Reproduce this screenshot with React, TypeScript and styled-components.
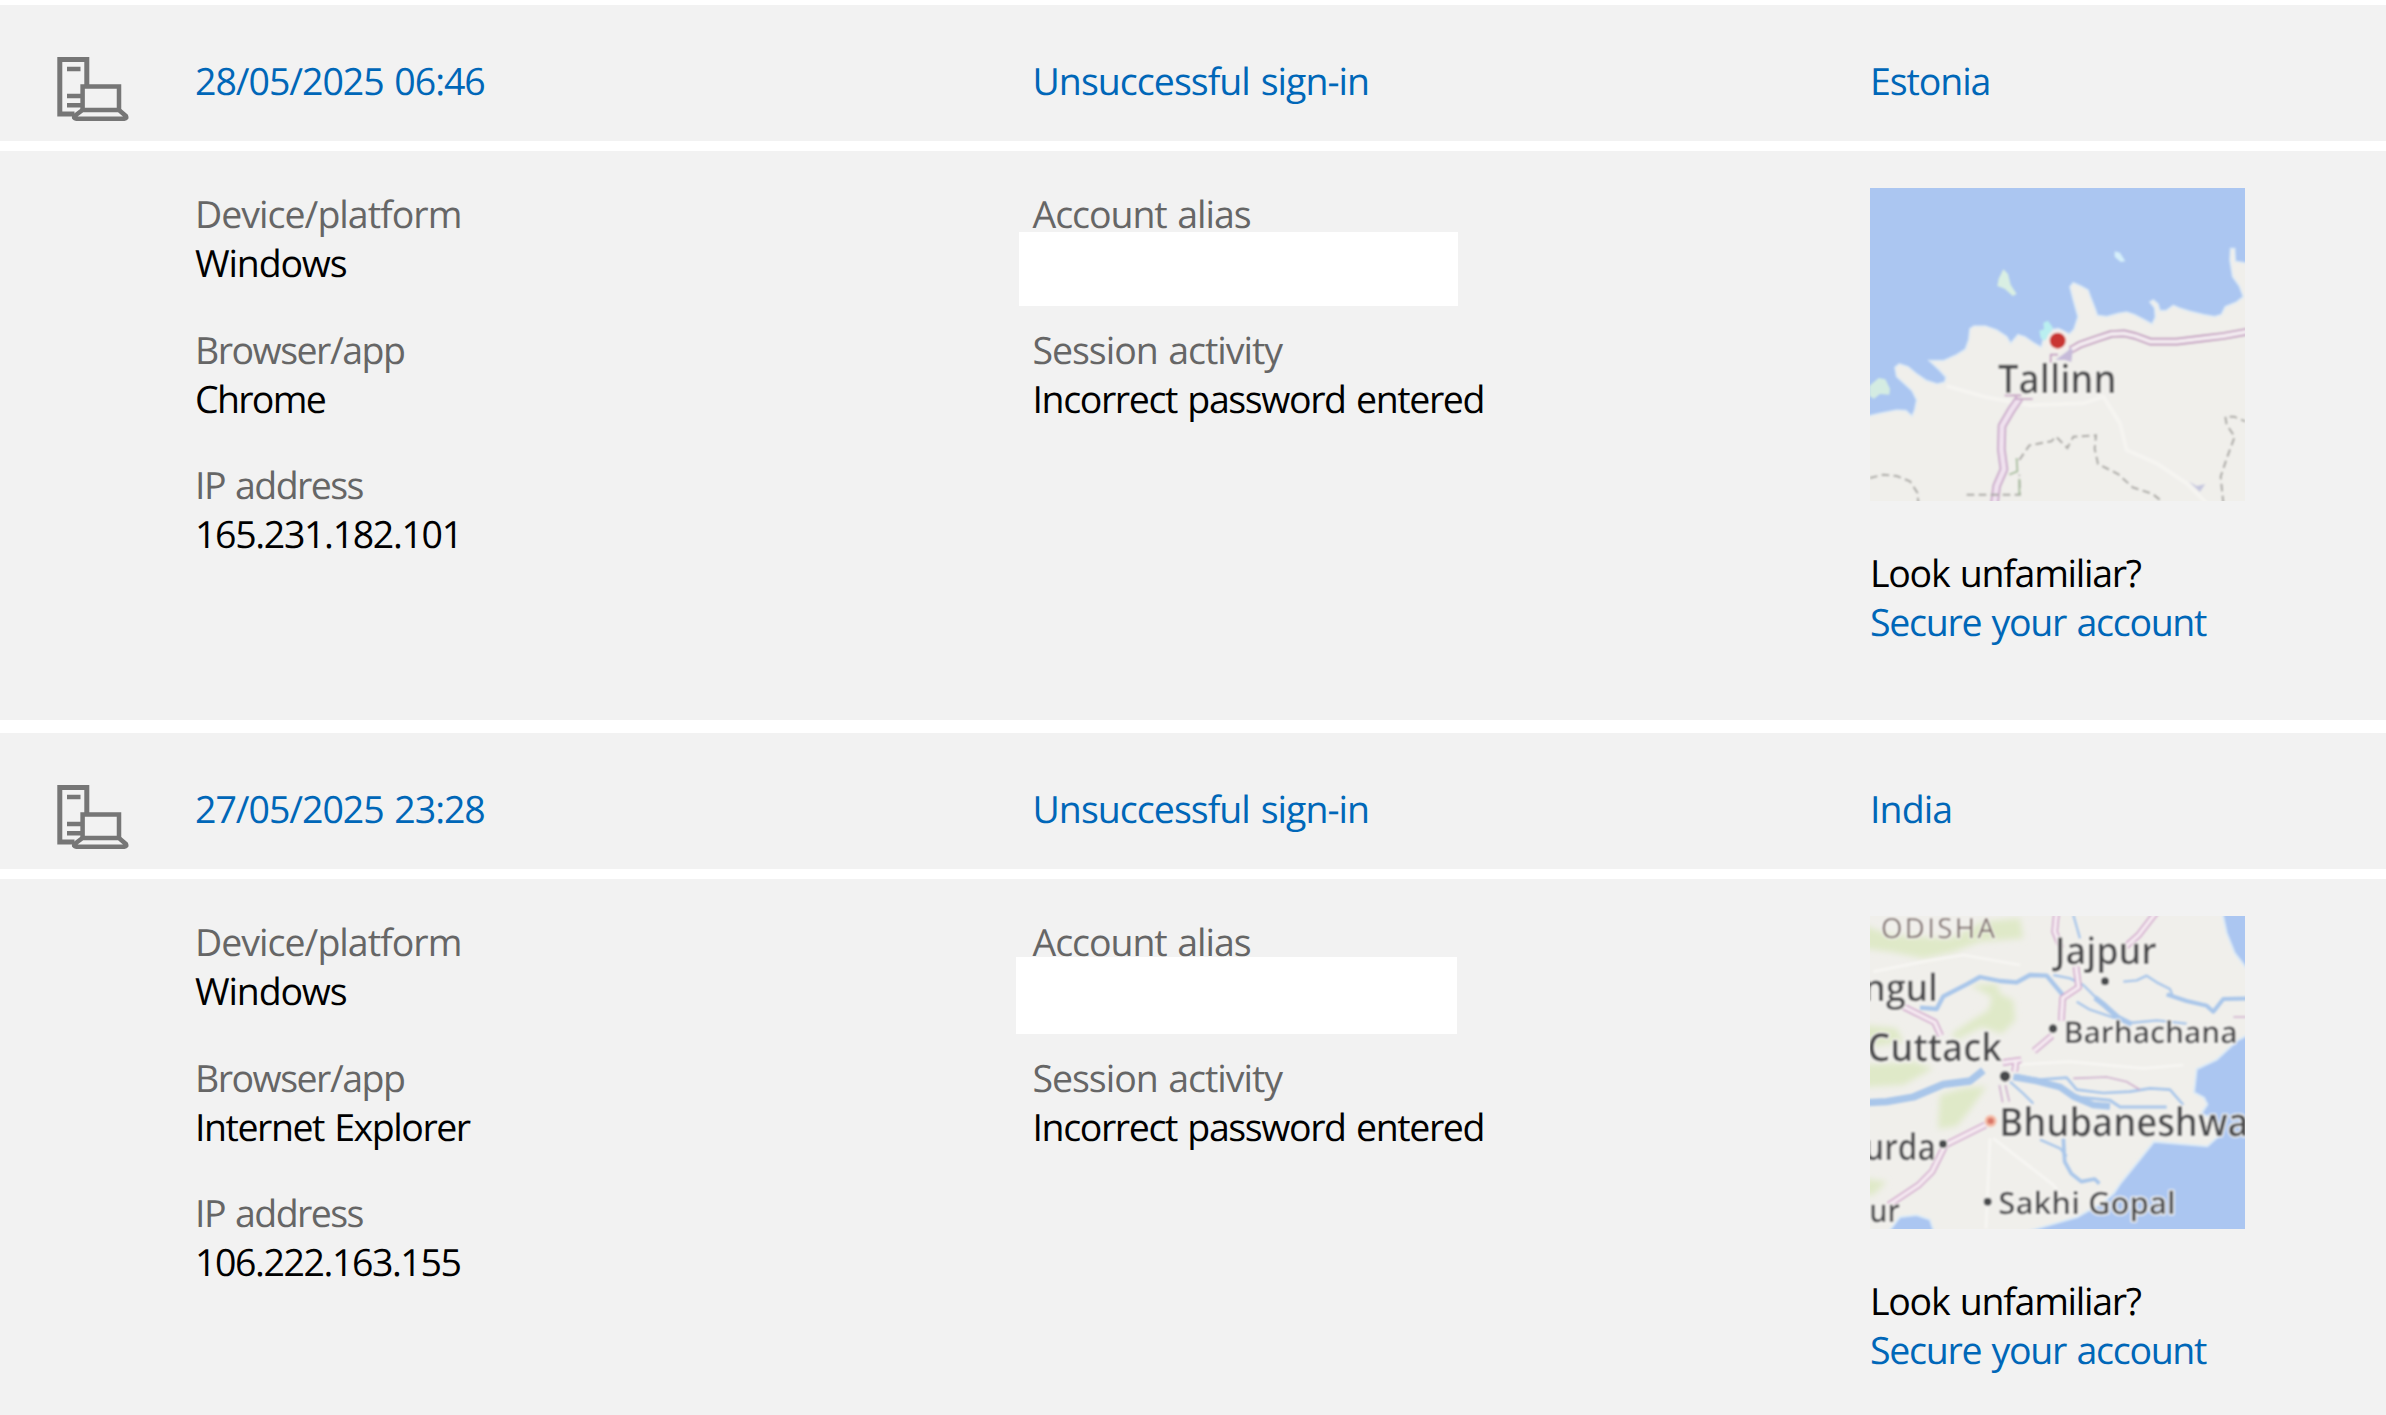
import React from 'react';
import styled, { createGlobalStyle } from 'styled-components';

const COLORS = {
  panel: '#f2f2f2',
  link: '#0067b8',
  label: '#666666',
  value: '#000000',
  icon: '#767676',
  water: '#abc6f1',
  land: '#f0efeb',
};

interface TextItem {
  text: string;
  tracking: number;
}

interface Mask {
  left: number;
  top: number;
  width: number;
  height: number;
}

interface Activity {
  id: string;
  date: TextItem;
  place: TextItem;
  browser: TextItem;
  ip: TextItem;
  mask: Mask;
  map: 'tallinn' | 'odisha';
}

const ACTIVITIES: Activity[] = [
  {
    id: 'estonia',
    date: { text: '28/05/2025 06:46', tracking: -1.04 },
    place: { text: 'Estonia', tracking: -1.1 },
    browser: { text: 'Chrome', tracking: -1.7 },
    ip: { text: '165.231.182.101', tracking: -1.34 },
    mask: { left: -13.5, top: -6, width: 439, height: 74 },
    map: 'tallinn',
  },
  {
    id: 'india',
    date: { text: '27/05/2025 23:28', tracking: -1.04 },
    place: { text: 'India', tracking: -0.9 },
    browser: { text: 'Internet Explorer', tracking: -1.46 },
    ip: { text: '106.222.163.155', tracking: -1.43 },
    mask: { left: -16.5, top: -9, width: 441, height: 77 },
    map: 'odisha',
  },
];

const GlobalStyle = createGlobalStyle`
  * {
    box-sizing: border-box;
  }

  body {
    margin: 0;
    overflow: hidden;
    background: #ffffff;
    font-family: 'Open Sans', 'Noto Sans', sans-serif;
    font-size: 37.5px;
    line-height: 49px;
    text-rendering: geometricPrecision;
  }
`;

const Page = styled.main`
  display: flex;
  flex-direction: column;
  gap: 13px;
  height: 100vh;
  padding-top: 5px;
  overflow: hidden;
`;

const Entry = styled.section`
  display: flex;
  flex-direction: column;
  flex-shrink: 0;
  gap: 10px;
`;

const Columns = styled.div`
  display: grid;
  grid-template-columns: 195px 837.5px 837.5px 1fr;
  background: ${COLORS.panel};
`;

const Summary = styled(Columns)`
  height: 136px;
  padding-top: 51px;
`;

const Details = styled(Columns)`
  height: 569px;
  padding-top: 38px;
`;

const IconCell = styled.div`
  padding: 1px 0 0 57px;
`;

const DeviceSvg = styled.svg`
  display: block;
  width: 72px;
  height: 64px;
`;

const DetailColumn = styled.div`
  display: flex;
  flex-direction: column;
  gap: 37.5px;
`;

const DetailList = styled(DetailColumn)<{ $first?: boolean }>`
  grid-column: ${({ $first }) => ($first ? 2 : 'auto')};
`;

const PlaceColumn = styled(DetailColumn)`
  gap: 47px;
  margin-top: -1px;
`;

const Line = styled.div<{ $tracking: number }>`
  height: 49px;
  letter-spacing: ${({ $tracking }) => $tracking}px;
  word-spacing: 2px;
  white-space: nowrap;
`;

const Label = styled(Line)`
  color: ${COLORS.label};
`;

const Value = styled(Line)`
  color: ${COLORS.value};
`;

const LinkLine = styled(Line)`
  color: ${COLORS.link};
  cursor: pointer;
`;

const AliasLine = styled.div`
  position: relative;
  height: 49px;
`;

const AliasMask = styled.div<{ $mask: Mask }>`
  position: absolute;
  left: ${({ $mask }) => $mask.left}px;
  top: ${({ $mask }) => $mask.top}px;
  width: ${({ $mask }) => $mask.width}px;
  height: ${({ $mask }) => $mask.height}px;
  background: #ffffff;
`;

const MapSvg = styled.svg`
  display: block;
  width: 375px;
  height: 313px;
  overflow: hidden;
`;

const MapLabel = styled.text<{ $region?: boolean }>`
  font-family: 'Open Sans', 'Noto Sans', sans-serif;
  font-weight: ${({ $region }) => ($region ? 500 : 600)};
  fill: ${({ $region }) => ($region ? '#80726f' : '#4a4a4c')};
  stroke: #f7f6f3;
  stroke-opacity: ${({ $region }) => ($region ? 0.5 : 0.9)};
  stroke-width: 9px;
  stroke-linejoin: round;
  paint-order: stroke;
`;

const DeviceIcon: React.FC = () => (
  <DeviceSvg viewBox="0 0 72 64" fill="none" stroke={COLORS.icon}>
    <path d="M17.5 57.1H2.8V2.6h27V28" strokeWidth="5" />
    <path d="M10 12h13.5M10 39h14M10 48.3h14" strokeWidth="4.6" />
    <path d="M25.6 53V29.6h36.4V53" strokeWidth="4.5" />
    <path
      d="M25.5 53h36.4l7 6q1.2 2.6-1.5 2.7H19.2q-3-.1-1.6-2.7z"
      strokeWidth="4.5"
      strokeLinejoin="round"
    />
  </DeviceSvg>
);

const TallinnMap: React.FC = () => (
  <MapSvg viewBox="30 24 1125 939" preserveAspectRatio="none">
    <defs>
      <filter id="tallinn-soft" x="-5%" y="-5%" width="110%" height="110%">
        <feGaussianBlur stdDeviation="2.6" />
      </filter>
    </defs>
    <rect x="30" y="24" width="1125" height="939" fill={COLORS.water} />
    <g filter="url(#tallinn-soft)">
      <path
        fill={COLORS.land}
        stroke="#dce9f5"
        strokeWidth="5"
        d="M10 712L60 700 110 690 138 692 156 708 164 690 170 660 156 632 130 608 110 590 105 562 118 552 144 560 168 580 200 602 232 612 254 606 258 592 240 572 208 542 250 542 290 524 316 508 326 480 330 446 342 438 376 438 410 450 440 470 452 490 474 464 494 470 520 488 544 502 552 470 564 450 596 446 628 462 642 448 654 410 640 360 630 320 640 308 662 318 684 330 692 352 706 388 712 406 740 410 776 400 800 396 824 404 850 418 876 432 886 412 884 384 870 366 880 360 894 372 900 392 918 392 940 376 958 384 990 394 1030 404 1064 410 1084 404 1096 380 1130 366 1150 350 1138 318 1118 290 1110 240 1112 206 1124 206 1126 244 1190 254 1190 1000 10 1000Z"
      />
      <path fill="#d9efe3" d="M430 268l14 14 8 32 18 28-12 6-24-22-22-8 4-22z" />
      <path fill="#d5effa" d="M764 214l16 4 16 26-14 2-18-16z" />
      <path fill="#d4ece2" d="M28 618l28-24 20 4 14 28-2 18-28-2-18 14-14-8z" />
      <path fill="#b9eff0" d="M538 452l14-4-2-20 14-6 14 20-4 22-20 18-12-8z" />
      <path fill="none" stroke="#f5f4f1" strokeWidth="12" d="M260 618l120 34 130 24 160-6 60-20 50 80 20 80 90 40 90 60 80 80" />
      <g fill="none" strokeLinejoin="round">
        <path stroke="#c8a5c8" strokeWidth="26" d="M478 655L454 690 426 738 424 808 432 868 410 918 402 980" />
        <path stroke="#f0e2ef" strokeWidth="15" d="M478 655L454 690 426 738 424 808 432 868 410 918 402 980" />
        <path stroke="#c095bd" strokeWidth="5" d="M434 646h50M468 657h50M572 548v-24h22" />
        <path stroke="#bf95bb" strokeWidth="23" d="M632 510L660 494 714 475 754 462 792 460 826 468 872 485 950 485 1030 475 1090 468 1190 450" />
        <path stroke="#f3ebf0" strokeWidth="13" d="M632 510L660 494 714 475 754 462 792 460 826 468 872 485 950 485 1030 475 1090 468 1190 450" />
      </g>
      <path fill="#c6bbd9" d="M586 540l36-26 10-12 6 10-4 34-20-6z" />
      <g fill="none" stroke="#a7a6a2" strokeWidth="6" strokeDasharray="23 13">
        <path d="M30 894l40-10 40 4 40 16 22 34 4 40" />
        <path d="M320 944h160l-2-60" />
        <path d="M478 840l30-44 66-12 14-14 34 34 18-34 68-4-4 40 10 46 60 30 44 40 60 20 30 24" />
        <path d="M1090 970l-8-80 20-60 22-60-24-36-4-24h26l34 14" />
      </g>
      <path d="M448 884l24-10-2-40M478 946v-50" fill="none" stroke="#a9bf9f" strokeWidth="6" />
      <path d="M986 904l24 14 26-6-16 24zM1050 946l18 10" fill="#c6c7df" />
      <circle cx="593" cy="482" r="33" fill="#f6eeea" />
      <circle cx="593" cy="482" r="24" fill="#c93632" />
      <MapLabel x="414" y="638" fontSize="119" textLength="356" lengthAdjust="spacingAndGlyphs">
        Tallinn
      </MapLabel>
    </g>
  </MapSvg>
);

const OdishaMap: React.FC = () => (
  <MapSvg viewBox="30 33 1125 939" preserveAspectRatio="none">
    <defs>
      <filter id="odisha-soft" x="-5%" y="-5%" width="110%" height="110%">
        <feGaussianBlur stdDeviation="2.4" />
      </filter>
      <filter id="odisha-haze" x="-10%" y="-10%" width="120%" height="120%">
        <feGaussianBlur stdDeviation="10" />
      </filter>
    </defs>
    <rect x="30" y="33" width="1125" height="939" fill={COLORS.land} />
    <g fill="#dfe9c8" filter="url(#odisha-haze)">
      <path d="M10 60l80 30 180 10 100-50 110-10 10 60-130 10-80 30-90 20-100-20-80-10z" />
      <path d="M330 240l80-4 10 30 40 20 6 60-40 40-60-20-80 40-10-20 60-40 50-30 10-40z" />
      <path d="M10 360l100 10 20 40-120 20zM10 480l150-10 60 20-90 50-120 6z" />
      <path d="M240 570l70-20 70-6-50 70-40 50-56 8z" />
      <path d="M10 820l70 10-40 40h-30z" />
    </g>
    <g filter="url(#odisha-soft)">
      <g fill={COLORS.water} stroke="#dceaf6" strokeWidth="6">
        <path d="M1082 0l18 84 24 60 70 90V0z" />
        <path d="M1190 374l-60 34-60 56-60 28-8 70 30 16 10 20-20 30 40 10 20 50-40 36-160-14-40 50-60 74-20 30-30 26-80 46-140 40-80 36h758z" />
        <path d="M70 1000l50-64 50-6 40 14 20 60z" />
      </g>
      <g fill="none" stroke="#a9c6ea" strokeLinejoin="round">
        <path strokeWidth="13" d="M180 308l50 4 20-38 70-36 40-22 60 12 50 4 40-22 50 2 30 36 20 24" />
        <path strokeWidth="22" d="M0 594l80-4 80-14 90-38 80-10 40-32" />
        <path strokeWidth="20" d="M460 516l70 12 70 18 40 28 60 26 50 4" />
        <path strokeWidth="8" d="M470 510l70 14 80-6 30 36 80 10 80-4 60-10 60 4 40 46" />
        <path strokeWidth="9" d="M650 576l100 10 30 20h140" />
        <path strokeWidth="16" d="M705 278l30 24 40 36 40 20" />
        <path strokeWidth="7" d="M790 230l40-4 30-14 30 20 40 20 10 26" />
        <path strokeWidth="12" d="M920 268l60 20 60 14 20 18 30-38 100-2" />
        <path strokeWidth="7" d="M580 210l50 10 40 20 50 50M650 290l40 24 60 20 60 20 80-8 90 10M640 30l20 70" />
        <path strokeWidth="7" d="M450 530l40 36 30 30M540 704l60 26 20 24" />
        <path strokeWidth="11" d="M610 700l4 70 20 36 30 24 40-8 14 14" />
      </g>
      <g fill="none" stroke="#f7f6f3" strokeWidth="8">
        <path d="M40 200l150-30 120-20 170 30M450 480l180-10 220 20 120-10M390 700l-12 270M400 700l180 140 60 80" />
      </g>
      <g fill="none" stroke="#d0a6ca" strokeWidth="20" strokeLinejoin="round">
        <path d="M590 20l-6 60 20 50M890 20l-54 70-38 34" />
        <path d="M648 185l8 62-48 32-4 68M576 392l-54 46M484 465l-56 8M468 470l-4 30" />
        <path d="M124 302l100 50 18 40M376 660l-120 60-40 80-40 40-90 60" />
      </g>
      <g fill="none" stroke="#f6ebf2" strokeWidth="11" strokeLinejoin="round">
        <path d="M590 20l-6 60 20 50M890 20l-54 70-38 34" />
        <path d="M648 185l8 62-48 32-4 68M576 392l-54 46M484 465l-56 8M468 470l-4 30" />
        <path d="M124 302l100 50 18 40M376 660l-120 60-40 80-40 40-90 60" />
      </g>
      <path d="M418 540l10 52M436 540l12 50M640 520l100-4 60 14 40 24M1120 336h40" fill="none" stroke="#cfb0ce" strokeWidth="5" />
      <g fill="#47484c" stroke="#f7f6f3" strokeWidth="4">
        <circle cx="735" cy="229" r="14" />
        <circle cx="579" cy="371" r="15" />
        <circle cx="435" cy="514" r="18" />
        <circle cx="249" cy="717" r="14" />
        <circle cx="383" cy="890" r="14" />
      </g>
      <circle cx="392" cy="648" r="18" fill="#f5bca8" />
      <circle cx="392" cy="648" r="10" fill="#d97768" />
      <MapLabel $region x="63" y="98" fontSize="83" textLength="342">ODISHA</MapLabel>
      <MapLabel x="584" y="176" fontSize="112" textLength="306" lengthAdjust="spacingAndGlyphs">Jajpur</MapLabel>
      <MapLabel x="10" y="287" fontSize="112" textLength="224" lengthAdjust="spacingAndGlyphs">ngul</MapLabel>
      <MapLabel x="22" y="467" fontSize="116" textLength="404" lengthAdjust="spacingAndGlyphs">Cuttack</MapLabel>
      <MapLabel x="611" y="414" fontSize="90" textLength="522" lengthAdjust="spacingAndGlyphs">Barhachana</MapLabel>
      <MapLabel x="418" y="692" fontSize="118" textLength="748" lengthAdjust="spacingAndGlyphs">Bhubaneshwa</MapLabel>
      <MapLabel x="12" y="766" fontSize="110" textLength="216" lengthAdjust="spacingAndGlyphs">urda</MapLabel>
      <MapLabel x="28" y="950" fontSize="96" textLength="92" lengthAdjust="spacingAndGlyphs">ur</MapLabel>
      <MapLabel x="415" y="926" fontSize="92" textLength="532" lengthAdjust="spacingAndGlyphs">Sakhi Gopal</MapLabel>
    </g>
  </MapSvg>
);

const ActivityEntry: React.FC<{ activity: Activity }> = ({ activity }) => (
  <Entry>
    <Summary>
      <IconCell>
        <DeviceIcon />
      </IconCell>
      <LinkLine $tracking={activity.date.tracking}>{activity.date.text}</LinkLine>
      <LinkLine $tracking={-0.97}>Unsuccessful sign-in</LinkLine>
      <LinkLine $tracking={activity.place.tracking}>{activity.place.text}</LinkLine>
    </Summary>

    <Details>
      <DetailList $first>
        <div>
          <Label $tracking={-0.98}>Device/platform</Label>
          <Value $tracking={-1.15}>Windows</Value>
        </div>
        <div>
          <Label $tracking={-1.5}>Browser/app</Label>
          <Value $tracking={activity.browser.tracking}>{activity.browser.text}</Value>
        </div>
        <div>
          <Label $tracking={-1.58}>IP address</Label>
          <Value $tracking={activity.ip.tracking}>{activity.ip.text}</Value>
        </div>
      </DetailList>

      <DetailList>
        <div>
          <Label $tracking={-1.06}>Account alias</Label>
          <AliasLine>
            <AliasMask $mask={activity.mask} />
          </AliasLine>
        </div>
        <div>
          <Label $tracking={-1.04}>Session activity</Label>
          <Value $tracking={-1.39}>Incorrect password entered</Value>
        </div>
      </DetailList>

      <PlaceColumn>
        {activity.map === 'tallinn' ? <TallinnMap /> : <OdishaMap />}
        <div>
          <Value $tracking={-1.27}>Look unfamiliar?</Value>
          <LinkLine $tracking={-1.3}>Secure your account</LinkLine>
        </div>
      </PlaceColumn>
    </Details>
  </Entry>
);

const App: React.FC = () => (
  <Page>
    <GlobalStyle />
    {ACTIVITIES.map(activity => (
      <ActivityEntry key={activity.id} activity={activity} />
    ))}
  </Page>
);

export default App;
